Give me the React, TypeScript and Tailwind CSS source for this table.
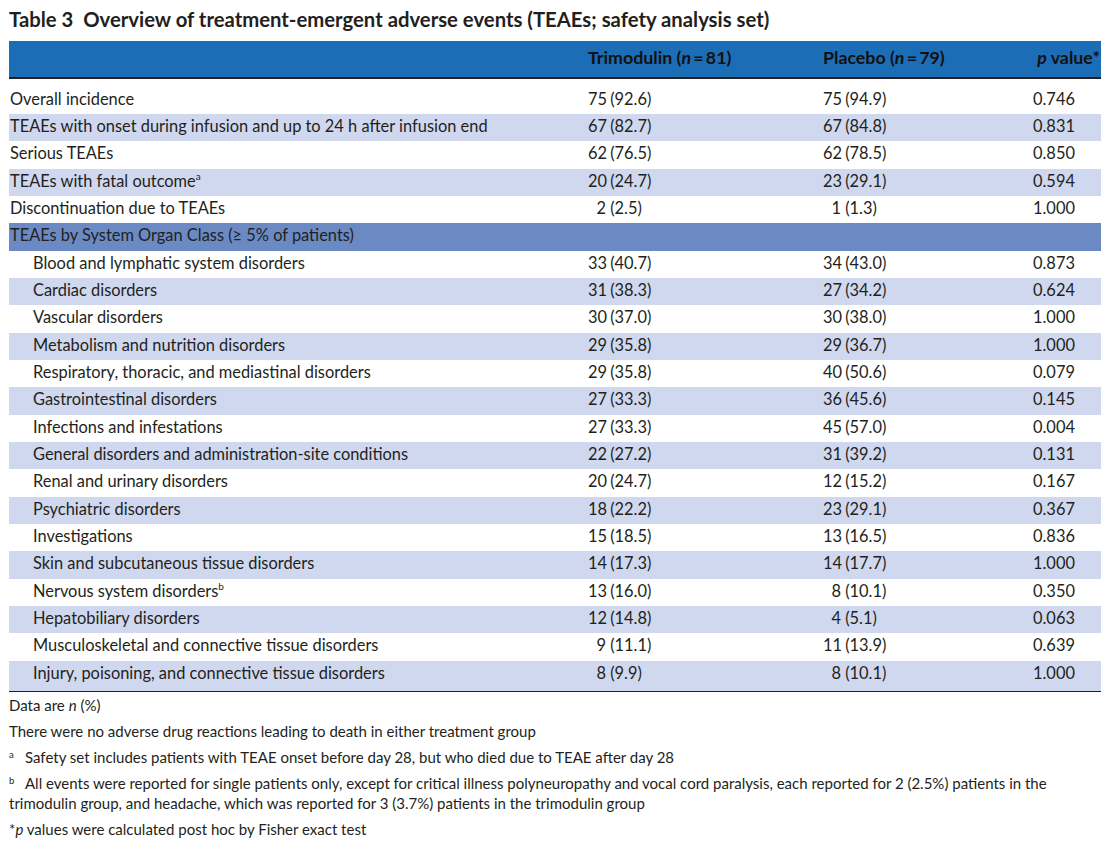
import React from "react";

type Row = {
  label: string;
  sup?: string;
  a: [string, string];
  b: [string, string];
  p: string;
  indent?: boolean;
};

const overview: Row[] = [
  { label: "Overall incidence", a: ["75", "92.6"], b: ["75", "94.9"], p: "0.746" },
  { label: "TEAEs with onset during infusion and up to 24 h after infusion end", a: ["67", "82.7"], b: ["67", "84.8"], p: "0.831" },
  { label: "Serious TEAEs", a: ["62", "76.5"], b: ["62", "78.5"], p: "0.850" },
  { label: "TEAEs with fatal outcome", sup: "a", a: ["20", "24.7"], b: ["23", "29.1"], p: "0.594" },
  { label: "Discontinuation due to TEAEs", a: ["2", "2.5"], b: ["1", "1.3"], p: "1.000" },
];

const bySoc: Row[] = [
  { label: "Blood and lymphatic system disorders", a: ["33", "40.7"], b: ["34", "43.0"], p: "0.873" },
  { label: "Cardiac disorders", a: ["31", "38.3"], b: ["27", "34.2"], p: "0.624" },
  { label: "Vascular disorders", a: ["30", "37.0"], b: ["30", "38.0"], p: "1.000" },
  { label: "Metabolism and nutrition disorders", a: ["29", "35.8"], b: ["29", "36.7"], p: "1.000" },
  { label: "Respiratory, thoracic, and mediastinal disorders", a: ["29", "35.8"], b: ["40", "50.6"], p: "0.079" },
  { label: "Gastrointestinal disorders", a: ["27", "33.3"], b: ["36", "45.6"], p: "0.145" },
  { label: "Infections and infestations", a: ["27", "33.3"], b: ["45", "57.0"], p: "0.004" },
  { label: "General disorders and administration-site conditions", a: ["22", "27.2"], b: ["31", "39.2"], p: "0.131" },
  { label: "Renal and urinary disorders", a: ["20", "24.7"], b: ["12", "15.2"], p: "0.167" },
  { label: "Psychiatric disorders", a: ["18", "22.2"], b: ["23", "29.1"], p: "0.367" },
  { label: "Investigations", a: ["15", "18.5"], b: ["13", "16.5"], p: "0.836" },
  { label: "Skin and subcutaneous tissue disorders", a: ["14", "17.3"], b: ["14", "17.7"], p: "1.000" },
  { label: "Nervous system disorders", sup: "b", a: ["13", "16.0"], b: ["8", "10.1"], p: "0.350" },
  { label: "Hepatobiliary disorders", a: ["12", "14.8"], b: ["4", "5.1"], p: "0.063" },
  { label: "Musculoskeletal and connective tissue disorders", a: ["9", "11.1"], b: ["11", "13.9"], p: "0.639" },
  { label: "Injury, poisoning, and connective tissue disorders", a: ["8", "9.9"], b: ["8", "10.1"], p: "1.000" },
].map(r => ({ ...r, indent: true }));

const grid = "grid grid-cols-[579px_235px_210px_68px]";

function Count({ v }: { v: [string, string] }) {
  return (
    <div className="flex">
      <span className="inline-block w-[18px] text-right">{v[0]}</span>
      <span className="whitespace-pre"> ({v[1]})</span>
    </div>
  );
}

function DataRow({ row, shaded, last }: { row: Row; shaded: boolean; last?: boolean }) {
  return (
    <div
      className={`${grid} items-center ${last ? "h-[30px] pb-[6px]" : "h-[27.35px] pb-[3px]"} ${
        shaded ? "bg-[#d0d8ef]" : "bg-white"
      }`}
    >
      <div className={row.indent ? "pl-[24px]" : "pl-[1px]"}>
        {row.label}
        {row.sup && <span className="text-[10px] align-top leading-[14px]">{row.sup}</span>}
      </div>
      <Count v={row.a} />
      <Count v={row.b} />
      <div>{row.p}</div>
    </div>
  );
}

// footnote marker, set as superscript with a fixed gap before the text
function Mark({ c }: { c: string }) {
  return <span className="inline-block w-[16px] text-[9.5px] leading-[10px] align-[5px]">{c}</span>;
}

export default function App() {
  return (
    <div className="w-[1120px] h-[848px] bg-white text-[#231f20] px-[9px] pt-[6px] font-['Lato',sans-serif]">
      <h1 className="text-[20.3px] leading-[26px] font-bold whitespace-pre">
        {"Table 3  Overview of treatment-emergent adverse events (TEAEs; safety analysis set)"}
      </h1>

      <div className="mt-[9px] w-[1092px] text-[16.4px]">
        {/* header band */}
        <div className={`${grid} items-center h-[36px] pb-[3px] bg-[#1b6db5] font-bold text-[17.8px] text-[#111]`}>
          <div />
          <div className="whitespace-nowrap">
            Trimodulin (<i>n</i>{"\u2009=\u2009"}81)
          </div>
          <div className="whitespace-nowrap">
            Placebo (<i>n</i>{"\u2009=\u2009"}79)
          </div>
          <div className="text-right pr-[1px] whitespace-nowrap">
            <i>p</i> value*
          </div>
        </div>
        <div className="h-[1.5px] bg-[#231f20]" />

        <div className="h-[8px]" />
        {overview.map((r, i) => (
          <DataRow key={r.label} row={r} shaded={i % 2 === 1} />
        ))}
        <div className="h-[27.35px] pb-[3px] flex items-center bg-[#6b8ac4] pl-[1px]">
          TEAEs by System Organ Class (≥ 5% of patients)
        </div>
        {bySoc.map((r, i) => (
          <DataRow key={r.label} row={r} shaded={i % 2 === 1} last={i === bySoc.length - 1} />
        ))}
        <div className="h-[1.5px] bg-[#231f20]" />

        {/* footnotes */}
        <div className="pt-[4px] text-[15px] leading-[19.5px] space-y-[6.5px] w-[1085px]">
          <p>
            Data are <i>n</i> (%)
          </p>
          <p>There were no adverse drug reactions leading to death in either treatment group</p>
          <p>
            <Mark c="a" />
            Safety set includes patients with TEAE onset before day 28, but who died due to TEAE after day 28
          </p>
          <p>
            <Mark c="b" />
            All events were reported for single patients only, except for critical illness polyneuropathy and vocal cord paralysis, each reported for 2 (2.5%) patients in the trimodulin group, and headache, which was reported for 3 (3.7%) patients in the trimodulin group
          </p>
          <p>
            *<i>p</i> values were calculated post hoc by Fisher exact test
          </p>
        </div>
      </div>
    </div>
  );
}
